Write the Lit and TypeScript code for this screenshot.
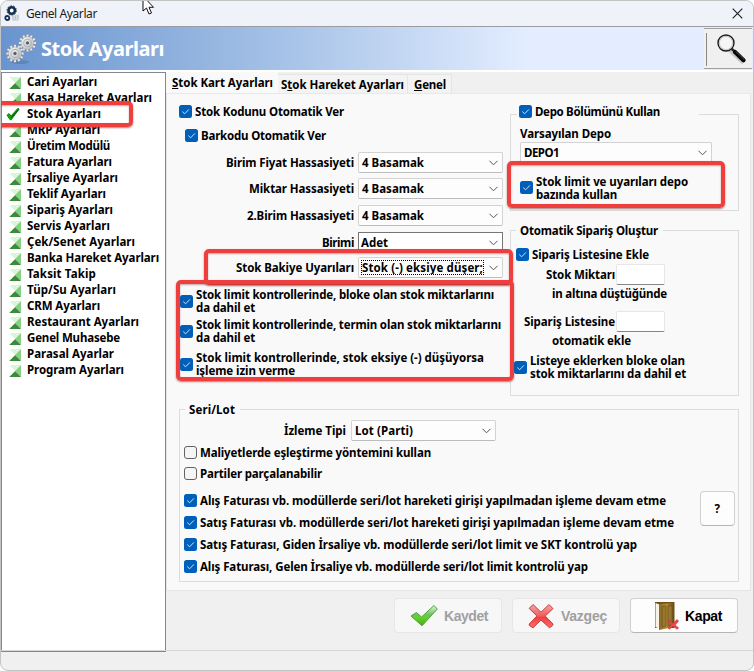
import { LitElement, html, css, svg } from "lit";
import { customElement, property } from "lit/decorators.js";

/** A bold label whose tracking is tuned so that it fills a given width. */
@customElement("fit-text")
class FitText extends LitElement {
  static styles = css`
    :host { display: block; flex: none; height: 13px; line-height: 13px; white-space: pre;
      font: bold 11.5px/13px "Noto Sans", "Open Sans", sans-serif; color: #000; }
    .s { display: inline-block; line-height: inherit; vertical-align: top; }
    u { text-decoration-thickness: 1px; text-underline-offset: 1px; }
  `;
  @property() text = "";
  @property({ type: Number }) w = 0;
  @property({ type: Number }) key = -1;
  render() {
    const { text: t, key: k } = this;
    return html`<span class="s">${k < 0 ? t : html`${t.slice(0, k)}<u>${t[k]}</u>${t.slice(k + 1)}`}</span>`;
  }
  firstUpdated() {
    const s = this.renderRoot.querySelector<HTMLElement>(".s")!;
    this.style.width = this.w + "px";
    s.style.letterSpacing = (this.w - s.getBoundingClientRect().width) / this.text.length + "px";
  }
}

const t = (text: string, w: number, key = -1) => html`<fit-text text=${text} w=${w} key=${key}></fit-text>`;

const tick = (on = true) => on
  ? html`<svg class="cb" viewBox="0 0 13 13"><rect width="13" height="13" rx="2.5" fill="#005fb8"/><path d="M3.3 6.6 5.6 8.8 9.9 4.4" fill="none" stroke="#cfe4f7" stroke-width="1"/></svg>`
  : html`<svg class="cb" viewBox="0 0 13 13"><rect x=".5" y=".5" width="12" height="12" rx="2.5" fill="#f5f5f5" stroke="#626262"/></svg>`;

const combo = (text: string, w: number, cls = "") => html`<div class="combo ${cls}">
  <span class="val">${t(text, w)}</span>
  <svg class="chev" viewBox="0 0 9 6"><path d="M.5 .8 4.5 4.8 8.5 .8" fill="none" stroke="#555" stroke-width="1"/></svg></div>`;

const MENU: [string, number][] = [
  ["Cari Ayarları", 70], ["Kasa Hareket Ayarları", 125], ["Stok Ayarları", 74], ["MRP Ayarları", 73],
  ["Üretim Modülü", 83], ["Fatura Ayarları", 85], ["İrsaliye Ayarları", 91], ["Teklif Ayarları", 79],
  ["Sipariş Ayarları", 86], ["Servis Ayarları", 83], ["Çek/Senet Ayarları", 108], ["Banka Hareket Ayarları", 132],
  ["Taksit Takip", 69], ["Tüp/Su Ayarları", 89], ["CRM Ayarları", 73], ["Restaurant Ayarları", 112],
  ["Genel Muhasebe", 93], ["Parasal Ayarlar", 87], ["Program Ayarları", 97],
];

const leaf = html`<svg class="leaf" viewBox="0 0 12 12"><path d="M0 0H12L6 6Z" fill="#d9f7d6"/><path d="M12 0V12L6 6Z" fill="#84d184"/><path d="M0 12H12L6 6Z" fill="#3d8a3d"/><path d="M0 0 6 6 0 12Z" fill="#fff"/></svg>`;
const greenTick = html`<svg class="gt" viewBox="0 0 14 14"><path d="M1 8.2 3 6.6 5 9 12 1.2 13 2.2 5.2 12.8 4.2 12.8Z" fill="#00b400" stroke="#00730a" stroke-width=".9"/><path d="M5 11 12.6 2.6" stroke="#003d00" stroke-width=".8"/></svg>`;

const gear = (cx: number, cy: number, r: number) => svg`<g transform="translate(${cx} ${cy})">
  ${Array.from({ length: 12 }, (_, i) => svg`<rect x="-1.1" y=${-r - 2.2} width="2.2" height="4" fill="#f0f0ec" stroke="#77797c" stroke-width=".25" transform="rotate(${i * 30})"/>`)}
  <circle r=${r} fill="url(#metal)" stroke="#85888c" stroke-width=".4"/>
  <circle r=${r * 0.62} fill="none" stroke="#a3a6a8" stroke-width=".8"/>
  <circle r="2.1" fill="#4f6075" stroke="#eee" stroke-width=".7"/></g>`;

const cross = (id: string) => html`<svg class="cross" viewBox="0 0 26 26">
  <defs><linearGradient id=${id} x1="0" y1="0" x2="0" y2="1"><stop offset="0" stop-color="#f9a5a5"/><stop offset=".5" stop-color="#ee5c5c"/><stop offset=".55" stop-color="#f23d3d"/><stop offset="1" stop-color="#ff7070"/></linearGradient></defs>
  <path d="M5 1.5 13 9.2 21 1.5 25 5.6 17.2 13 25 21 24.6 22.6 21.5 24.8 13 17 5 24.8 1.4 22.6 1.2 21 8.9 13 1.2 5.4Z" fill="url(#${id})" stroke="#c93c3c" stroke-width="1" stroke-linejoin="round"/></svg>`;

@customElement("app-root")
class AppRoot extends LitElement {
  static styles = css`
    :host { display: block; width: 754px; height: 671px; background: #fff; }
    * { box-sizing: border-box; }
    svg { display: block; flex: none; overflow: visible; }
    .win { position: relative; width: 754px; height: 671px; overflow: hidden; display: flex; flex-direction: column;
      border: 1px solid #c4c4c4; border-radius: 8px; background: #f0f0f0; }
    .title { height: 26px; flex: none; display: flex; align-items: center; padding: 0 9px 0 2px; background: #f0f2f9;
      border-bottom: 1px solid #9a9ca1; }
    .title .app { width: 17px; height: 17px; margin-right: 6px; }
    .title fit-text { font: 12px/15px "Noto Sans", sans-serif; height: 15px; flex: 1; color: #1c1c1c; }
    .x { width: 11px; height: 11px; margin-right: 1px; }
    .banner { height: 43px; flex: none; display: flex; align-items: center; padding: 0 1px 0 5px;
      background: linear-gradient(90deg, #6994cf 0, #a3c0e6 36%, #e3edff 70%); }
    .banner .gears { width: 31px; height: 32px; }
    .banner fit-text { margin-left: 4px; margin-right: auto; font: bold 20px/26px "Noto Sans", sans-serif; height: 26px; color: #fff; }
    .search { width: 48px; height: 41px; background: #f0f0f0; border-top: 1px solid #a0a0a0; border-bottom: 1px solid #a0a0a0;
      display: flex; padding: 4px 0 0 2px; }
    .search svg { width: 38px; height: 33px; }
    .sep { width: 1px; height: 33px; background: #888; margin-right: 4px; }
    .body { height: 580px; flex: none; display: flex; border-top: 2px solid #fff; }
    .menu { width: 165px; height: 580px; background: #fff; border: 1px solid #828790; padding-top: 1px; }
    .item { height: 16px; display: flex; align-items: center; padding-left: 7px; }
    .item fit-text { margin: 0 0 1px 6px; }
    .leaf { width: 12px; height: 12px; margin-top: 1px; }
    .gt { width: 14px; height: 14px; margin: 0 1px 0 -3px; }
    .main { flex: 1; display: flex; flex-direction: column; }
    .tabs { height: 21px; flex: none; display: flex; align-items: flex-end; }
    .tab { height: 19px; padding: 3px 0 0 3px; background: #f3f3f3; border: 1px solid #e5e5e5; border-left: 0; border-bottom: 0; }
    .tab.on { height: 21px; width: 112px; background: #f9f9f9; border: 0; padding: 4px 0 0 6px; }
    .tab.b { width: 130px; }
    .tab.c { width: 44px; padding-left: 6px; }
    .panel { width: 585px; height: 498px; flex: none; background: #f9f9f9; border: 1px solid #e5e5e5; border-top-color: #e9e9e9; }
    .top { display: flex; height: 315px; }
    .left { width: 343px; flex: none; }
    .chk { display: flex; gap: 3px; height: 13px; }
    .cb { width: 13px; height: 13px; }
    .two { height: 26px; }
    .two .cb { margin-top: 6px; }
    .two div { margin-top: -1px; }
    .a1 { margin: 11px 0 0 12px; } .a2 { margin: 11px 0 10px 18px; }
    .field { display: grid; grid-template-columns: 187px 145px; column-gap: 4px; align-items: center; justify-items: end; height: 21px; margin-bottom: 5px; }
    .f2, .f3 { margin-bottom: 6px; } .f4 { margin-bottom: 4px; }
    .combo { width: 145px; height: 21px; border: 1px solid #d3d3d3; border-bottom-color: #bdbdbd; border-radius: 2px; background: #fdfdfd;
      display: flex; align-items: center; justify-content: space-between; padding: 0 4px 0 3px; }
    .combo.dark { background: #fff; border-color: #767676; border-radius: 0; padding-left: 2px; }
    .combo.focus { padding-left: 2px; } .combo.focus .val { border: 1px dotted #000; height: 15px; overflow: hidden; width: 123px; }
    .combo.wide { width: 192px; }
    .chev { width: 9px; height: 6px; }
    .b1 { margin: 11px 0 0 13px; } .b2 { margin: 4px 0 0 13px; } .b3 { margin: 7px 0 0 13px; }
    .box { border: 1px solid #dcdcdc; }
    .g1 { width: 229px; height: 97px; margin-top: 20px; }
    .g1 .head { width: 182px; padding-left: 2px; margin: -10px 0 0 6px; background: #f9f9f9; }
    .g1 .l1 { margin: 9px 0 0 9px; }
    .g1 .combo { margin: 2px 0 0 9px; }
    .g1 .two { margin: 12px 0 0 9px; }
    .g1 .two div { margin-top: 0; }
    .g2 { width: 229px; height: 166px; margin-top: 19px; }
    .cap { display: flex; padding: 0 5px 0 4px; margin: -7px 0 0 5px; background: #f9f9f9; width: max-content; }
    .g2 .c1 { margin: 11px 0 0 5px; }
    .inp { display: flex; width: 154px; height: 21px; justify-content: flex-end; align-items: center; margin-top: 3px; gap: 1px; }
    .inp i { width: 49px; height: 21px; background: #fff; border: 1px solid #e6e6e6; border-bottom: 1px solid #868686; border-radius: 2px; }
    .g2 .n { margin: 2px 0 0 41px; }
    .inp.second { margin-top: 11px; }
    .g2 .n2 { margin: 2px 0 0 41px; }
    .g2 .two { margin: 8px 0 0 3px; }
    .g3 { width: 560px; height: 173px; margin: 0 0 0 12px; position: relative; }
    .g3 .field { grid-template-columns: 166px 145px; column-gap: 5px; margin: 4px 0 0 0; }
    .g3 .chk { margin-left: 4px; }
    .g3 .m1 { margin-top: 5px; } .g3 .m2 { margin-top: 8px; } .g3 .m3 { margin-top: 14px; } .g3 .m4 { margin-top: 9px; }
    .help { position: absolute; left: 520px; top: 81px; width: 35px; height: 35px; display: flex; align-items: center; justify-content: center; }
    .btn, .help { background: #fdfdfd; border: 1px solid #d0d0d0; border-bottom-color: #b5b5b5; border-radius: 4px; }
    .foot { display: flex; justify-content: flex-end; gap: 10px; padding: 7px 15px 0 0; }
    .btn { width: 108px; height: 35px; display: flex; align-items: center; padding-left: 15px; }
    .btn fit-text { font: bold 14px/17px "Liberation Sans", Arial, sans-serif; height: 17px; margin-top: 2px; }
    .btn.off { background: #f7f7f7; border-color: #e6e6e6; }
    .btn.off fit-text { color: #a0a0a0; }
    .check { width: 28px; height: 23px; margin-right: 6px; }
    .cross { width: 26px; height: 26px; margin-right: 7px; }
    .door { width: 25px; height: 30px; margin: 0 6px 0 8px; }
    .status { flex: 1; border-top: 1px solid #d7d7d7; }
    .mark { position: absolute; border: 4px solid #ef3e3e; border-radius: 5px; box-shadow: 0 1px 2px #7d3030a0, inset 0 1px 2px #7d303070; }
    .k1 { left: -6px; top: 100px; width: 138px; height: 26px; }
    .k2 { left: 506px; top: 160px; width: 218px; height: 47px; }
    .k3 { left: 203px; top: 248px; width: 309px; height: 36px; }
    .k4 { left: 175px; top: 279px; width: 338px; height: 101px; }
    .cursor { position: absolute; left: 141px; top: -6px; width: 12px; height: 20px; }
  `;

  field(label: string, lw: number, value: string, vw: number, n: string, cls = "") {
    return html`<div class="field ${n}">${t(label, lw)}${combo(value, vw, cls)}</div>`;
  }
  check(text: string, w: number, cls: string, on = true) {
    return html`<div class="chk ${cls}">${tick(on)}${t(text, w)}</div>`;
  }
  check2(a: string, aw: number, b: string, bw: number, cls: string) {
    return html`<div class="chk two ${cls}">${tick()}<div>${t(a, aw)}${t(b, bw)}</div></div>`;
  }

  render() {
    return html`<div class="win">
      <div class="title">
        <svg class="app" viewBox="0 0 17 17"><circle cx="8.7" cy="5.5" r="3.2" fill="#fff" stroke="#17304f" stroke-width="2.6"/><circle cx="8.7" cy="5.5" r="4.7" fill="none" stroke="#17304f" stroke-width="1" stroke-dasharray="1.5 1.4"/><circle cx="4.3" cy="13" r="2" fill="#fff" stroke="#17304f" stroke-width="1.8"/><path d="M8.5 11H16M9.5 13H16M9 15H15M10 10.5V15M12.5 10.5V15M15 9.5V15" stroke="#b9bec6" stroke-width=".9"/></svg>
        ${t("Genel Ayarlar", 71)}
        <svg class="x" viewBox="0 0 11 11"><path d="M.7 .7 10.3 10.3M10.3 .7 .7 10.3" stroke="#1c1c1c" stroke-width="1.1"/></svg>
      </div>
      <div class="banner">
        <svg class="gears" viewBox="0 0 31 32"><defs><linearGradient id="metal" x1="0" y1="0" x2="1" y2="1"><stop offset="0" stop-color="#fafaf7"/><stop offset="1" stop-color="#b4b6b7"/></linearGradient></defs>
          <ellipse cx="14" cy="29" rx="9" ry="2" fill="#42638f" opacity=".35"/>${gear(21.5, 10, 6.4)}${gear(9, 20.5, 6.6)}</svg>
        ${t("Stok Ayarları", 123)}
        <div class="search"><div class="sep"></div><svg viewBox="0 0 38 33"><path d="M20 17 33 29" stroke="#999" stroke-width="6" opacity=".45"/><circle cx="15" cy="10" r="8" fill="#f6f6f6" stroke="#1d1d1d" stroke-width="1.4"/><circle cx="15" cy="10" r="6.6" fill="none" stroke="#bbb" stroke-width=".8"/><path d="M20.7 15.8 24 19" stroke="#222" stroke-width="2.4"/><path d="M24 19 32.5 27.3" stroke="#080808" stroke-width="4.2" stroke-linecap="round"/><path d="M24.5 18.3 33 26.3" stroke="#777" stroke-width=".6"/></svg></div>
      </div>
      <div class="body">
        <div class="menu">${MENU.map(([s, w], i) => html`<div class="item">${i === 2 ? greenTick : leaf}${t(s, w)}</div>`)}</div>
        <div class="main">
          <div class="tabs">
            <div class="tab on">${t("Stok Kart Ayarları", 101, 0)}</div>
            <div class="tab b">${t("Stok Hareket Ayarları", 123, 1)}</div>
            <div class="tab c">${t("Genel", 32, 0)}</div>
          </div>
          <div class="panel">
            <div class="top">
              <div class="left">
                ${this.check("Stok Kodunu Otomatik Ver", 149, "a1")}
                ${this.check("Barkodu Otomatik Ver", 125, "a2")}
                ${this.field("Birim Fiyat Hassasiyeti", 128, "4 Basamak", 62, "f1")}
                ${this.field("Miktar Hassasiyeti", 105, "4 Basamak", 62, "f2")}
                ${this.field("2.Birim Hassasiyeti", 107, "4 Basamak", 62, "f3")}
                ${this.field("Birimi", 32, "Adet", 27, "f4", "dark")}
                ${this.field("Stok Bakiye Uyarıları", 118, "Stok (-) eksiye düşer;", 121, "f5", "focus")}
                ${this.check2("Stok limit kontrollerinde, bloke olan stok miktarlarını", 298, "da dahil et", 59, "b1")}
                ${this.check2("Stok limit kontrollerinde, termin olan stok miktarlarını", 305, "da dahil et", 59, "b2")}
                ${this.check2("Stok limit kontrollerinde, stok eksiye (-) düşüyorsa", 288, "işleme izin verme", 99, "b3")}
              </div>
              <div class="right">
                <div class="box g1">
                  ${this.check("Depo Bölümünü Kullan", 125, "head")}
                  <div class="l1">${t("Varsayılan Depo", 91)}</div>
                  ${combo("DEPO1", 35, "wide")}
                  ${this.check2("Stok limit ve uyarıları depo", 152, "bazında kullan", 81, "")}
                </div>
                <div class="box g2">
                  <div class="cap">${t("Otomatik Sipariş Oluştur", 138)}</div>
                  ${this.check("Sipariş Listesine Ekle", 117, "c1")}
                  <div class="inp">${t("Stok Miktarı", 69)}<i></i></div>
                  <div class="n">${t("in altına düştüğünde", 115)}</div>
                  <div class="inp second">${t("Sipariş Listesine", 91)}<i></i></div>
                  <div class="n2">${t("otomatik ekle", 79)}</div>
                  ${this.check2("Listeye eklerken bloke olan", 155, "stok miktarlarını da dahil et", 156, "")}
                </div>
              </div>
            </div>
            <div class="box g3">
              <div class="cap">${t("Seri/Lot", 46)}</div>
              ${this.field("İzleme Tipi", 62, "Lot (Parti)", 58, "")}
              ${this.check("Maliyetlerde eşleştirme yöntemini kullan", 231, "m1", false)}
              ${this.check("Partiler parçalanabilir", 122, "m2", false)}
              ${this.check("Alış Faturası vb. modüllerde seri/lot hareketi girişi yapılmadan işleme devam etme", 466, "m3")}
              ${this.check("Satış Faturası vb. modüllerde seri/lot hareketi girişi yapılmadan işleme devam etme", 474, "m4")}
              ${this.check("Satış Faturası, Giden İrsaliye vb. modüllerde seri/lot limit ve SKT kontrolü yap", 437, "m4")}
              ${this.check("Alış Faturası, Gelen İrsaliye vb. modüllerde seri/lot limit kontrolü yap", 388, "m4")}
              <div class="help">${t("?", 6)}</div>
            </div>
          </div>
          <div class="foot">
            <div class="btn off"><svg class="check" viewBox="0 0 28 23"><defs><linearGradient id="gc" x1="0" y1="0" x2="0" y2="1"><stop offset="0" stop-color="#e4f6dd"/><stop offset=".45" stop-color="#6fc05a"/><stop offset=".6" stop-color="#5fd51e"/><stop offset="1" stop-color="#4ca81c"/></linearGradient></defs><path d="M1 12 6.5 8.5 11.5 13 24 1.5 27.3 5 12 21.8Z" fill="url(#gc)" stroke="#4d9f48" stroke-width="1"/></svg>${t("Kaydet", 44)}</div>
            <div class="btn off">${cross("xa")}${t("Vazgeç", 46)}</div>
            <div class="btn"><svg class="door" viewBox="0 0 25 30"><defs><linearGradient id="dr" x1="0" x2="1"><stop offset="0" stop-color="#8a6a22"/><stop offset=".5" stop-color="#b08b3c"/><stop offset="1" stop-color="#6b4d14"/></linearGradient></defs>
              <path d="M1 1H20.5V27H1Z" fill="#6e5218"/><path d="M1.5 2 5.5 3.5V28L1.5 26Z" fill="#f7f3e6"/><path d="M5 3 20 2V26L5 29Z" fill="url(#dr)"/><path d="M8 5.5 12 5V25L8 25.8ZM14 5 18 4.6V23.5L14 24.5Z" fill="#9a7730" stroke="#5b430f" stroke-width=".5"/>
              <path d="M14.5 19 19 22.3 23 18.5 24.7 20 21.3 24 24.7 27 23 28.2 19 25.3 15.5 28.2 14 27 17 23.5 14 20.5Z" fill="#f0484c" stroke="#b8262c" stroke-width=".5"/></svg>${t("Kapat", 37)}</div>
          </div>
        </div>
      </div>
      <div class="status"></div>
      <div class="mark k1"></div><div class="mark k2"></div><div class="mark k3"></div><div class="mark k4"></div>
      <svg class="cursor" viewBox="0 0 12 20"><path d="M1 1V16L4.5 13 7 19 9.5 18 7 12.3H11.5Z" fill="#fff" stroke="#111" stroke-width="1"/></svg>
    </div>`;
  }
}
